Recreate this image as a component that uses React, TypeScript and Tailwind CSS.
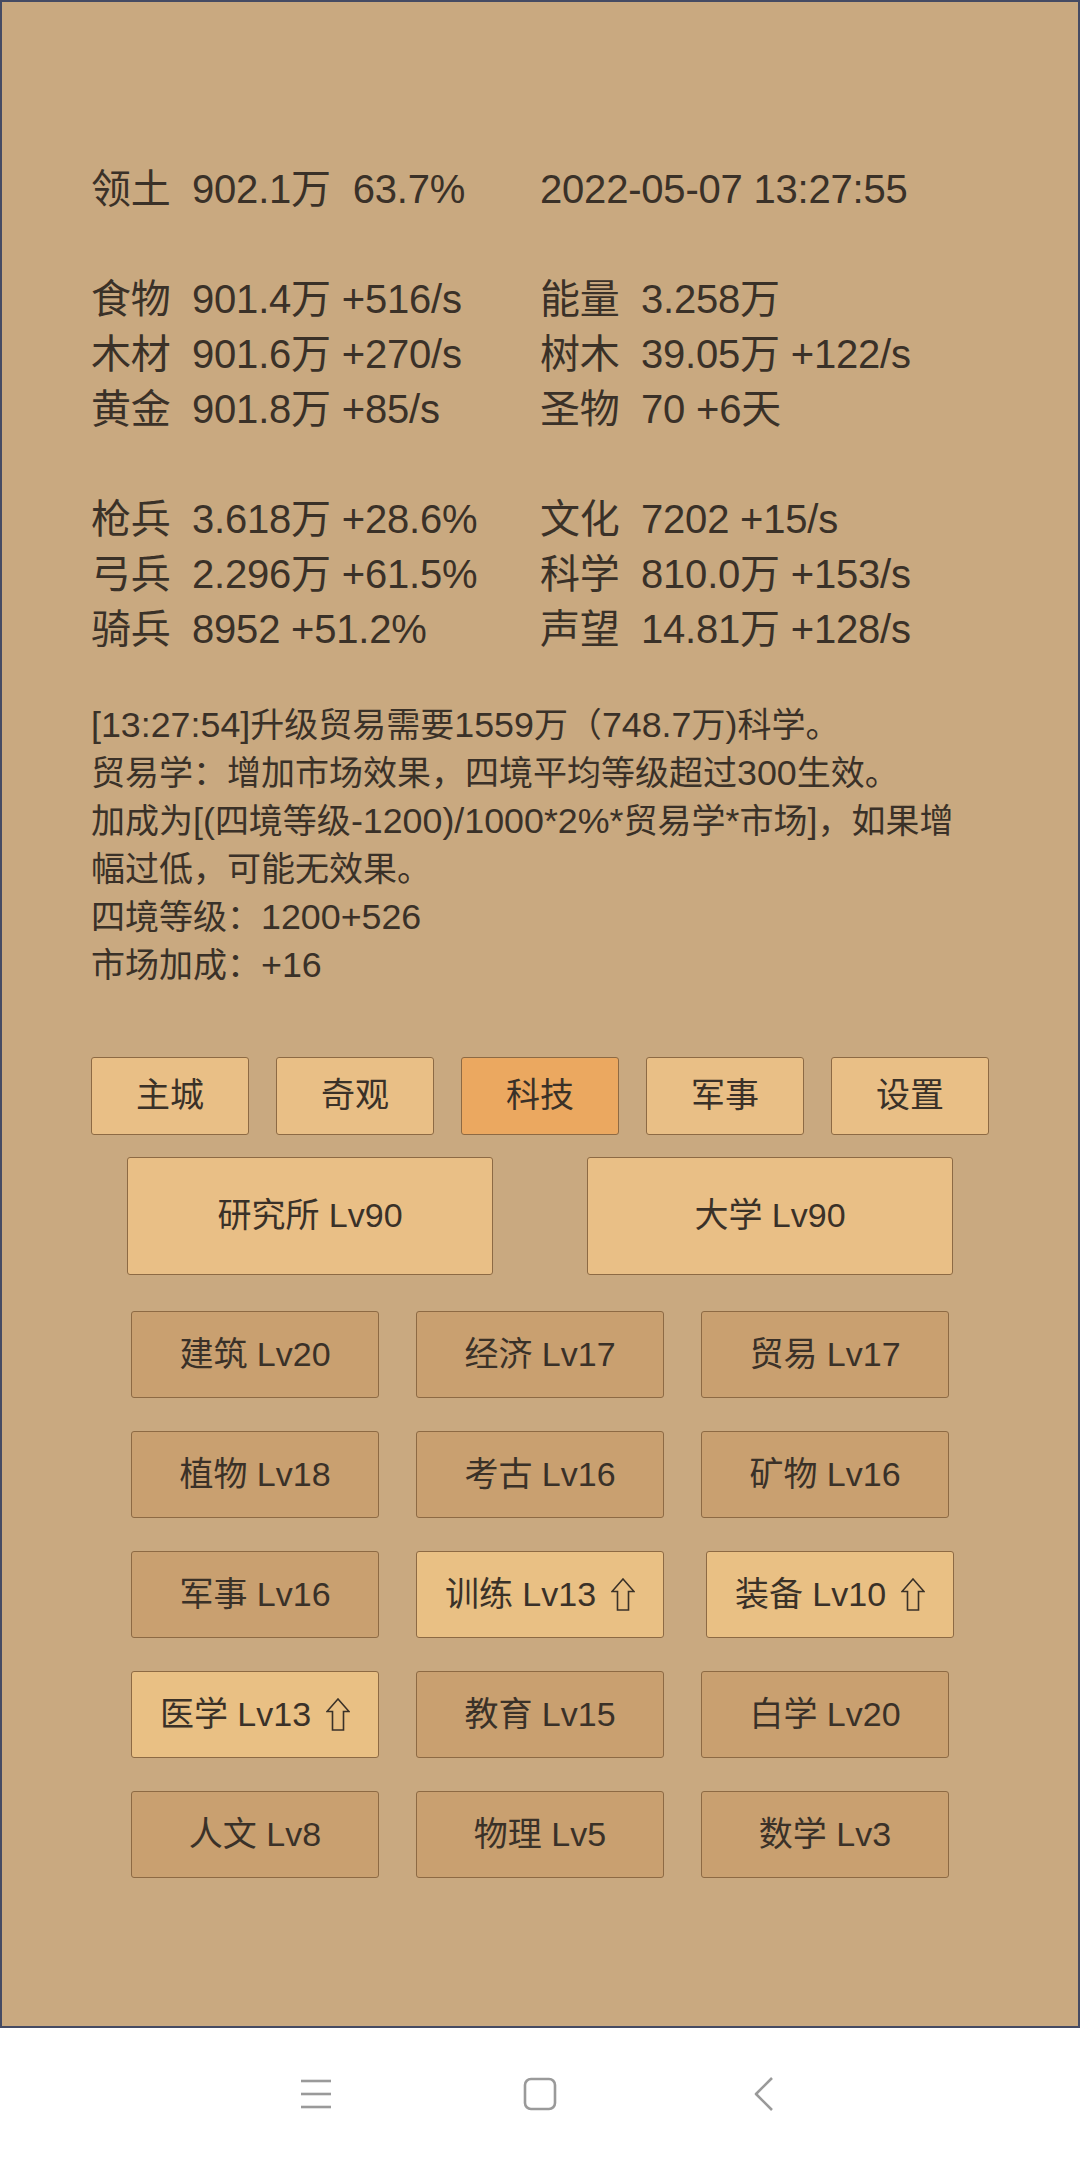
import React from "react";

const statsRows: [string, string][] = [
  ["领土", "902.1万  63.7%"],
  ["", ""],
  ["食物", "901.4万 +516/s"],
  ["木材", "901.6万 +270/s"],
  ["黄金", "901.8万 +85/s"],
  ["", ""],
  ["枪兵", "3.618万 +28.6%"],
  ["弓兵", "2.296万 +61.5%"],
  ["骑兵", "8952 +51.2%"],
];

const statsRight: [string, string][] = [
  ["", "2022-05-07 13:27:55"],
  ["", ""],
  ["能量", "3.258万"],
  ["树木", "39.05万 +122/s"],
  ["圣物", "70 +6天"],
  ["", ""],
  ["文化", "7202 +15/s"],
  ["科学", "810.0万 +153/s"],
  ["声望", "14.81万 +128/s"],
];

const infoLines = [
  "[13:27:54]升级贸易需要1559万（748.7万)科学。",
  "贸易学：增加市场效果，四境平均等级超过300生效。",
  "加成为[(四境等级-1200)/1000*2%*贸易学*市场]，如果增",
  "幅过低，可能无效果。",
  "四境等级：1200+526",
  "市场加成：+16",
];

const tabs = ["主城", "奇观", "科技", "军事", "设置"];

const techs: { name: string; up?: boolean; shift?: boolean }[] = [
  { name: "建筑 Lv20" },
  { name: "经济 Lv17" },
  { name: "贸易 Lv17" },
  { name: "植物 Lv18" },
  { name: "考古 Lv16" },
  { name: "矿物 Lv16" },
  { name: "军事 Lv16" },
  { name: "训练 Lv13", up: true },
  { name: "装备 Lv10", up: true, shift: true },
  { name: "医学 Lv13", up: true },
  { name: "教育 Lv15" },
  { name: "白学 Lv20" },
  { name: "人文 Lv8" },
  { name: "物理 Lv5" },
  { name: "数学 Lv3" },
];

function StatLine({ label, value }: { label: string; value: string }) {
  if (!label && !value) return <div className="h-[55px]" />;
  if (!label)
    return <div className="h-[55px] leading-[55px] whitespace-pre">{value}</div>;
  return (
    <div className="h-[55px] leading-[55px] flex whitespace-pre">
      <span className="w-[101px] shrink-0">{label}</span>
      <span>{value}</span>
    </div>
  );
}

function InfoLine({ text }: { text: string }) {
  const parts = text.split(/([\x20-\x7E]+)/).filter((p) => p.length > 0);
  return (
    <div className="h-[48.2px] leading-[48.2px] whitespace-pre">
      {parts.map((p, i) =>
        /^[\x20-\x7E]+$/.test(p) ? (
          <span key={i} className="text-[35.8px]">
            {p}
          </span>
        ) : (
          <span key={i}>{p}</span>
        )
      )}
    </div>
  );
}

function UpArrow() {
  return (
    <svg width="24" height="33" viewBox="0 0 24 33" className="ml-[15px] shrink-0">
      <polygon
        points="12,1 23,13.5 17.5,13.5 17.5,32 6.5,32 6.5,13.5 1,13.5"
        fill="none"
        stroke="#3a3128"
        strokeWidth="1.6"
        strokeLinejoin="miter"
      />
    </svg>
  );
}

export default function App() {
  return (
    <div className="w-[1080px] h-[2160px] bg-white flex flex-col font-['Liberation_Sans','Noto_Sans_CJK_SC',sans-serif] text-[#3a3128]">
      <div className="h-[2028px] shrink-0 bg-[#c9a980] border-2 border-[#454b63] pt-[159.5px] px-[89px]">
        <div className="grid grid-cols-2 text-[40px] tracking-[-0.2px]">
          <div>
            {statsRows.map(([l, v], i) => (
              <StatLine key={i} label={l} value={v} />
            ))}
          </div>
          <div>
            {statsRight.map(([l, v], i) => (
              <StatLine key={i} label={l} value={v} />
            ))}
          </div>
        </div>

        <div className="mt-[44px] text-[34px]">
          {infoLines.map((t, i) => (
            <InfoLine key={i} text={t} />
          ))}
        </div>

        <div className="mt-[67px] grid grid-cols-5 gap-[27px]">
          {tabs.map((t) => (
            <div
              key={t}
              className={`h-[78px] rounded-[3px] border border-[#8d6a44] flex items-center justify-center text-[34px] ${
                t === "科技" ? "bg-[#eba860]" : "bg-[#e9bf86]"
              }`}
            >
              {t}
            </div>
          ))}
        </div>

        <div className="mt-[22px] flex justify-center gap-[94px]">
          {["研究所 Lv90", "大学 Lv90"].map((t) => (
            <div
              key={t}
              className="w-[366px] h-[118px] rounded-[3px] border border-[#8d6a44] bg-[#e9bf86] flex items-center justify-center text-[34px]"
            >
              {t}
            </div>
          ))}
        </div>

        <div className="mt-[36.5px] grid grid-cols-[repeat(3,248px)] justify-center gap-x-[37px] gap-y-[33px]">
          {techs.map((t) => (
            <div
              key={t.name}
              className={`w-[248px] h-[87px] rounded-[3px] border border-[#8d6a44] flex items-center justify-center text-[34px] whitespace-pre ${
                t.up ? "bg-[#e9c084]" : "bg-[#c9a070]"
              } ${t.shift ? "ml-[5px]" : ""}`}
            >
              {t.name}
              {t.up ? <UpArrow /> : null}
            </div>
          ))}
        </div>
      </div>

      <div className="h-[132px] shrink-0 bg-white flex items-center justify-center gap-[164px]">
        <div className="w-[60px] flex justify-center">
          <svg width="32" height="30" viewBox="0 0 32 30">
            <g stroke="#9a9a9a" strokeWidth="2.6" strokeLinecap="butt">
              <line x1="1" y1="2" x2="31" y2="2" />
              <line x1="1" y1="15" x2="31" y2="15" />
              <line x1="1" y1="28" x2="31" y2="28" />
            </g>
          </svg>
        </div>
        <div className="w-[60px] flex justify-center">
          <svg width="34" height="34" viewBox="0 0 34 34">
            <rect x="2" y="2" width="30" height="30" rx="6" fill="none" stroke="#9a9a9a" strokeWidth="2.6" />
          </svg>
        </div>
        <div className="w-[60px] flex justify-center">
          <svg width="22" height="34" viewBox="0 0 22 34">
            <polyline points="19,1 3,17 19,33" fill="none" stroke="#9a9a9a" strokeWidth="2.6" strokeLinejoin="round" />
          </svg>
        </div>
      </div>
    </div>
  );
}
